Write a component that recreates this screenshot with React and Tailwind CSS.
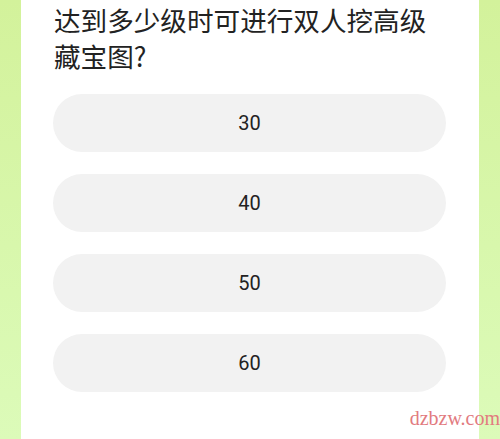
import React from "react";

const options = ["30", "40", "50", "60"];

export default function App() {
  return (
    <div
      className="flex h-[439px] w-[500px] overflow-hidden bg-gradient-to-b from-[#d3f29b] to-[#dcfbb9]"
      style={{ fontFamily: '"Noto Sans CJK SC", Roboto, sans-serif' }}
    >
      <div className="w-[21px] shrink-0" />
      <div className="relative flex w-[458px] flex-col bg-white">
        <div className="pl-[33px] pr-[10px] pt-[2px] text-[26.6px] leading-[36px] text-[#222]">
          <div>达到多少级时可进行双人挖高级</div>
          <div>藏宝图?</div>
        </div>
        <div className="mt-[20px] flex flex-col gap-[22px] pl-[32px]">
          {options.map((o) => (
            <div
              key={o}
              className="flex h-[58px] w-[393px] items-center justify-center rounded-full bg-[#f2f2f2] text-[20px] text-[#222]"
              style={{ fontFamily: "Roboto, sans-serif" }}
            >
              {o}
            </div>
          ))}
        </div>
        <div
          className="absolute right-[-21px] top-[404px] text-[20px] leading-[28px] text-[#e27b7f]"
          style={{ fontFamily: '"Liberation Serif", serif' }}
        >
          dzbzw.com
        </div>
      </div>
      <div className="w-[21px] shrink-0" />
    </div>
  );
}
